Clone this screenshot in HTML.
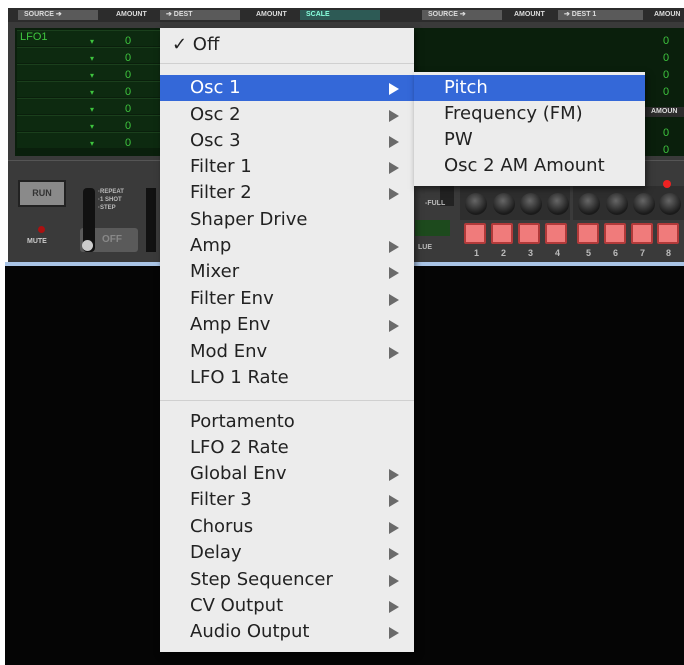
<!DOCTYPE html>
<html><head><meta charset="utf-8"><style>
*{margin:0;padding:0;box-sizing:border-box}
body{width:684px;height:665px;background:#fff;position:relative;overflow:hidden;font-family:"DejaVu Sans","Liberation Sans",sans-serif}
.a{position:absolute}
.lbl{position:absolute;top:10px;height:10px;font:bold 7px "Liberation Sans",sans-serif;color:#ddd;background:#5a5a5a;line-height:10px;padding-left:6px}
.row{position:absolute;height:16px;background:#0d2a10;border-top:1px solid #1a3f1c}
.g{color:#3ec43e;font:11px "Liberation Sans",sans-serif;position:absolute}
.menu{position:absolute;background:#ececec;box-shadow:2px 3px 6px rgba(0,0,0,.5);font-size:18px;color:#222}
.it{position:absolute;left:0;right:0;height:26px;line-height:26px;padding-left:30px}
.ar{position:absolute;right:15px;top:8px;width:0;height:0;border-left:10px solid #6a6a6a;border-top:6px solid transparent;border-bottom:6px solid transparent}
.hl{background:#3468d8;color:#fff}
.hl .ar{border-left-color:#fff}
.pad{position:absolute;top:223px;width:22px;height:21px;background:#f07b7b;border:2px solid #b23a3a;border-radius:2px}
.kn{position:absolute;top:193px;width:22px;height:22px;border-radius:50%;background:radial-gradient(circle at 45% 35%,#666,#1a1a1a 70%)}
.num{position:absolute;top:248px;color:#bbb;font:bold 9px "Liberation Sans",sans-serif}
</style></head><body>
<div class="a" style="left:8px;top:8px;width:676px;height:255px;background:#3a3a3a"></div>
<div class="a" style="left:8px;top:8px;width:676px;height:14px;background:#2c2c2c"></div>
<div class="lbl" style="left:18px;width:80px">SOURCE ➔</div>
<div class="lbl" style="left:110px;width:50px;background:#2c2c2c">AMOUNT</div>
<div class="lbl" style="left:160px;width:80px">➔ DEST</div>
<div class="lbl" style="left:250px;width:45px;background:#2c2c2c">AMOUNT</div>
<div class="lbl" style="left:300px;width:80px;background:#2d5a55;color:#8fd">SCALE</div>
<div class="lbl" style="left:422px;width:80px">SOURCE ➔</div>
<div class="lbl" style="left:508px;width:50px;background:#2c2c2c">AMOUNT</div>
<div class="lbl" style="left:558px;width:85px">➔ DEST 1</div>
<div class="lbl" style="left:648px;width:40px;background:#2c2c2c">AMOUN</div>
<div class="a" style="left:15px;top:28px;width:669px;height:128px;background:#0a1f0c"></div>
<div class="row" style="left:17px;top:30px;width:143px"></div>
<div class="row" style="left:17px;top:47px;width:143px"></div>
<div class="row" style="left:17px;top:64px;width:143px"></div>
<div class="row" style="left:17px;top:81px;width:143px"></div>
<div class="row" style="left:17px;top:98px;width:143px"></div>
<div class="row" style="left:17px;top:115px;width:143px"></div>
<div class="row" style="left:17px;top:132px;width:143px"></div>
<div class="g" style="left:20px;top:31px">LFO1</div>
<div class="g" style="left:125px;top:33px;line-height:17px">0<br>0<br>0<br>0<br>0<br>0<br>0</div>
<div class="g" style="left:90px;top:33px;line-height:17px;font-size:8px">▾<br>▾<br>▾<br>▾<br>▾<br>▾<br>▾</div>
<div class="g" style="left:663px;top:33px;line-height:17px">0<br>0<br>0<br>0</div>
<div class="g" style="left:663px;top:125px;line-height:17px">0<br>0</div>
<div class="lbl" style="left:645px;top:107px;width:39px;background:#2c2c2c">AMOUN</div>
<div class="a" style="left:8px;top:160px;width:676px;height:1px;background:#555"></div>
<div class="a" style="left:18px;top:180px;width:48px;height:27px;background:#8a8a8a;border:2px solid #222;font:bold 9px 'Liberation Sans',sans-serif;color:#333;text-align:center;line-height:23px">RUN</div>
<div class="a" style="left:38px;top:226px;width:7px;height:7px;border-radius:50%;background:#a11"></div>
<div class="a" style="left:27px;top:238px;font:bold 7px 'Liberation Sans';color:#ccc">MUTE</div>
<div class="a" style="left:80px;top:228px;width:58px;height:24px;background:#5a5a5a;border-radius:3px;color:#888;font:bold 10px 'Liberation Sans';line-height:24px;padding-left:22px">OFF</div>
<div class="a" style="left:83px;top:188px;width:12px;height:64px;background:#111;border-radius:4px"></div>
<div class="a" style="left:82px;top:240px;width:11px;height:11px;border-radius:50%;background:#ccc"></div>
<div class="a" style="left:98px;top:188px;font:bold 6px 'Liberation Sans';color:#bbb;line-height:8px">·REPEAT<br>·1 SHOT<br>·STEP</div>
<div class="a" style="left:146px;top:188px;width:10px;height:64px;background:#111"></div>
<div class="a" style="left:440px;top:178px;width:14px;height:28px;background:#222"></div>
<div class="a" style="left:425px;top:200px;font:bold 7px 'Liberation Sans';color:#bbb">-FULL</div>
<div class="a" style="left:415px;top:220px;width:35px;height:16px;background:#1d4a1d"></div>
<div class="a" style="left:418px;top:244px;font:bold 7px 'Liberation Sans';color:#bbb">LUE</div>
<div class="a" style="left:460px;top:186px;width:110px;height:34px;background:#2e2e2e"></div>
<div class="a" style="left:573px;top:186px;width:111px;height:34px;background:#2e2e2e"></div>
<div class="kn" style="left:465px"></div><div class="kn" style="left:493px"></div><div class="kn" style="left:520px"></div><div class="kn" style="left:547px"></div>
<div class="kn" style="left:578px"></div><div class="kn" style="left:606px"></div><div class="kn" style="left:633px"></div><div class="kn" style="left:659px"></div>
<div class="a" style="left:663px;top:180px;width:8px;height:8px;border-radius:50%;background:#e22"></div>
<div class="pad" style="left:464px"></div><div class="pad" style="left:491px"></div><div class="pad" style="left:518px"></div><div class="pad" style="left:545px"></div>
<div class="pad" style="left:577px"></div><div class="pad" style="left:604px"></div><div class="pad" style="left:631px"></div><div class="pad" style="left:657px"></div>
<div class="num" style="left:474px">1</div><div class="num" style="left:501px">2</div><div class="num" style="left:528px">3</div><div class="num" style="left:555px">4</div>
<div class="num" style="left:586px">5</div><div class="num" style="left:613px">6</div><div class="num" style="left:640px">7</div><div class="num" style="left:666px">8</div>
<div class="a" style="left:5px;top:262px;width:679px;height:4px;background:#a9c4e6"></div>
<div class="a" style="left:5px;top:266px;width:679px;height:399px;background:#050505"></div>

<div class="menu" style="left:160px;top:28px;width:254px;height:624px">
<div class="it" style="top:4px;padding-left:12px">✓ Off</div>
<div class="a" style="left:0;right:0;top:35px;height:1px;background:#d0d0d0"></div>
<div class="it hl" style="top:47px">Osc 1<i class="ar"></i></div>
<div class="it" style="top:74px">Osc 2<i class="ar"></i></div>
<div class="it" style="top:100px">Osc 3<i class="ar"></i></div>
<div class="it" style="top:126px">Filter 1<i class="ar"></i></div>
<div class="it" style="top:152px">Filter 2<i class="ar"></i></div>
<div class="it" style="top:179px">Shaper Drive</div>
<div class="it" style="top:205px">Amp<i class="ar"></i></div>
<div class="it" style="top:231px">Mixer<i class="ar"></i></div>
<div class="it" style="top:258px">Filter Env<i class="ar"></i></div>
<div class="it" style="top:284px">Amp Env<i class="ar"></i></div>
<div class="it" style="top:311px">Mod Env<i class="ar"></i></div>
<div class="it" style="top:337px">LFO 1 Rate</div>
<div class="a" style="left:0;right:0;top:372px;height:1px;background:#d0d0d0"></div>
<div class="it" style="top:381px">Portamento</div>
<div class="it" style="top:407px">LFO 2 Rate</div>
<div class="it" style="top:433px">Global Env<i class="ar"></i></div>
<div class="it" style="top:459px">Filter 3<i class="ar"></i></div>
<div class="it" style="top:486px">Chorus<i class="ar"></i></div>
<div class="it" style="top:512px">Delay<i class="ar"></i></div>
<div class="it" style="top:539px">Step Sequencer<i class="ar"></i></div>
<div class="it" style="top:565px">CV Output<i class="ar"></i></div>
<div class="it" style="top:591px">Audio Output<i class="ar"></i></div>
</div>
<div class="menu" style="left:414px;top:72px;width:231px;height:114px">
<div class="it hl" style="top:3px">Pitch</div>
<div class="it" style="top:29px">Frequency (FM)</div>
<div class="it" style="top:55px">PW</div>
<div class="it" style="top:81px">Osc 2 AM Amount</div>
</div>
</body></html>
